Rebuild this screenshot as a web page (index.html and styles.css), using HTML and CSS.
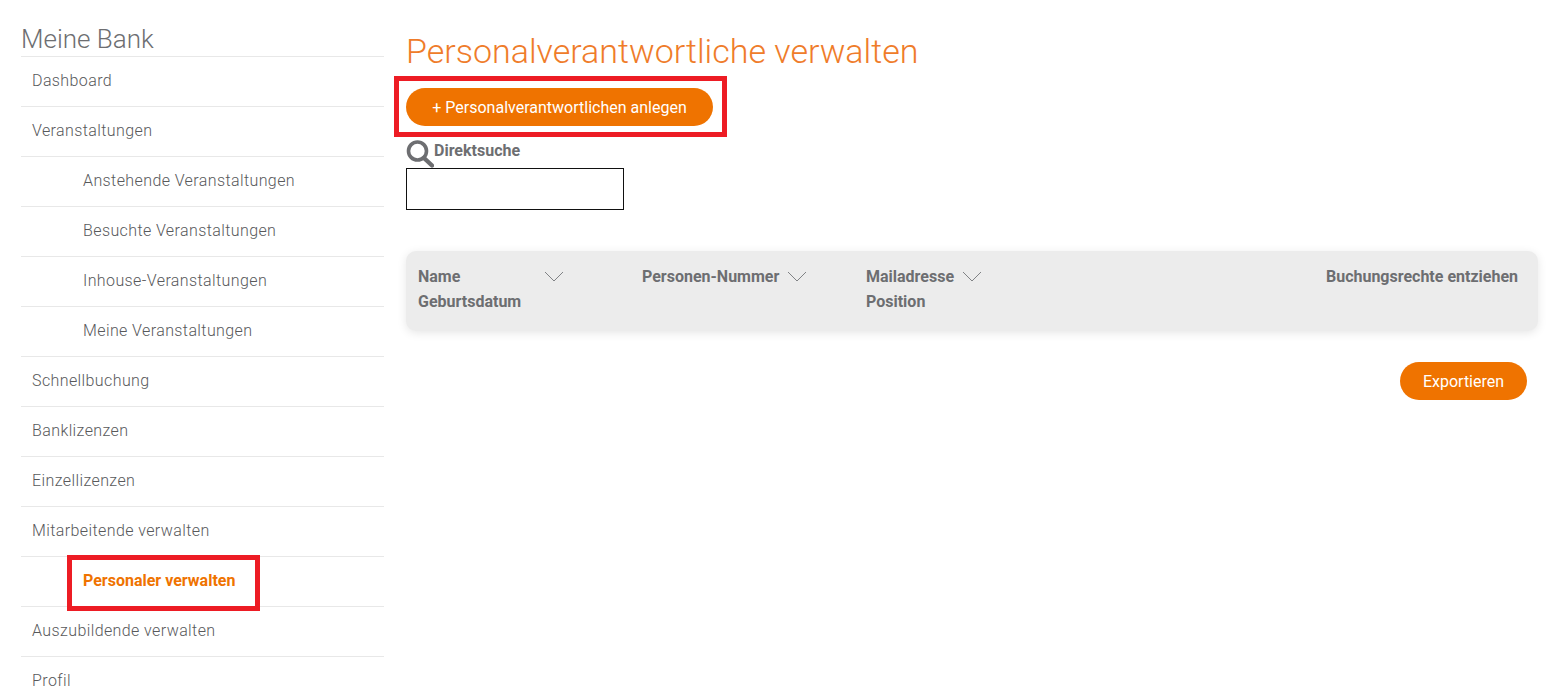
FILE: index.html
```html
<!DOCTYPE html>
<html lang="de">
<head>
<meta charset="utf-8">
<title>Personalverantwortliche verwalten</title>
<link rel="stylesheet" href="styles.css">
</head>
<body>
<div class="page">
  <aside class="sidebar">
    <h2 class="sidebar-title">Meine Bank</h2>
    <ul class="nav">
      <li class="nav-item">Dashboard</li>
      <li class="nav-item">Veranstaltungen</li>
      <li class="nav-item sub">Anstehende Veranstaltungen</li>
      <li class="nav-item sub">Besuchte Veranstaltungen</li>
      <li class="nav-item sub">Inhouse-Veranstaltungen</li>
      <li class="nav-item sub">Meine Veranstaltungen</li>
      <li class="nav-item">Schnellbuchung</li>
      <li class="nav-item">Banklizenzen</li>
      <li class="nav-item">Einzellizenzen</li>
      <li class="nav-item">Mitarbeitende verwalten</li>
      <li class="nav-item sub active">Personaler verwalten<span class="mark mark-nav"></span></li>
      <li class="nav-item">Auszubildende verwalten</li>
      <li class="nav-item">Profil</li>
    </ul>
  </aside>
  <main class="main">
    <h1 class="title">Personalverantwortliche verwalten</h1>
    <div class="add-row">
      <button class="btn btn-add">+ Personalverantwortlichen anlegen</button>
      <span class="mark mark-add"></span>
    </div>
    <div class="search-label">
      <svg class="search-icon" width="28" height="28" viewBox="0 0 28 28" aria-hidden="true">
        <circle cx="11.5" cy="11" r="9" fill="none" stroke="#6d6e71" stroke-width="3.6"/>
        <path d="M18 18l8 7.5" fill="none" stroke="#6d6e71" stroke-width="4.4" stroke-linecap="round"/>
      </svg>
      <span>Direktsuche</span>
    </div>
    <input class="search-input" type="text" aria-label="Direktsuche">
    <div class="table-head">
      <div class="col col-name">
        <div class="cell"><span class="label-name">Name</span><svg class="chev" width="20" height="11" viewBox="0 0 20 11"><path d="M1 1l9 9 9-9" fill="none" stroke="#808285" stroke-width="1"/></svg></div>
        <div>Geburtsdatum</div>
      </div>
      <div class="col col-num">
        <div class="cell">Personen-Nummer<svg class="chev" width="20" height="11" viewBox="0 0 20 11"><path d="M1 1l9 9 9-9" fill="none" stroke="#808285" stroke-width="1"/></svg></div>
      </div>
      <div class="col col-mail">
        <div class="cell">Mailadresse<svg class="chev" width="20" height="11" viewBox="0 0 20 11"><path d="M1 1l9 9 9-9" fill="none" stroke="#808285" stroke-width="1"/></svg></div>
        <div>Position</div>
      </div>
      <div class="col col-rights">Buchungsrechte entziehen</div>
    </div>
    <div class="actions">
      <button class="btn btn-export">Exportieren</button>
    </div>
  </main>
</div>
</body>
</html>
```

FILE: styles.css
```css
* { box-sizing: border-box; }
html, body { margin: 0; height: 700px; overflow: hidden; background: #fff; }
body { font-family: Roboto, "Liberation Sans", sans-serif; color: #6d6e71; }
.page { display: flex; height: 700px; padding-left: 21px; }
.sidebar { width: 363px; flex: none; }
.sidebar-title {
  margin: 0; height: 57px; padding-top: 23px;
  font-size: 26px; line-height: 32px; font-weight: 300; color: #6d6e71;
  border-bottom: 1px solid #e8e8e8;
}
.nav { list-style: none; margin: 0; padding: 0; }
.nav-item {
  position: relative;
  height: 50px; line-height: 48px; padding-left: 11px;
  font-size: 16px; font-weight: 300; letter-spacing: .4px; color: #58595b;
  border-bottom: 1px solid #e8e8e8;
}
.nav-item.sub { padding-left: 62px; }
.nav-item.active { font-weight: 700; color: #ef7300; letter-spacing: 0; }
.mark { position: absolute; border: 5px solid #ed1c24; pointer-events: none; }
.mark-nav { left: 46px; top: -2px; width: 193px; height: 56px; }
.main { flex: 1; padding: 0 22px 0 22px; min-width: 0; }
.title {
  margin: 0; padding-top: 31px; height: 88px;
  font-size: 34px; line-height: 40px; font-weight: 300; color: #ef7c2a;
}
.add-row { position: relative; height: 38px; }
.mark-add { left: -12px; top: -12px; width: 333px; height: 61px; }
.btn {
  border: 0; border-radius: 19px; height: 38px; padding: 0 20px;
  background: #ef7300; color: #fff;
  font-family: inherit; font-size: 16px; font-weight: 400;
}
.btn-add { width: 307px; padding: 0; }
.search-label {
  display: flex; align-items: flex-start; height: 42px; padding-top: 14px;
  font-size: 16px; font-weight: 700; line-height: 22px;
}
.search-icon { flex: none; margin-top: 0; }
.search-input {
  display: block; width: 218px; height: 42px; margin-top: 0;
  border: 1px solid #111; background: #fff; padding: 0;
}
.table-head {
  display: flex; margin-top: 41px; height: 80px; padding: 13px 20px 0 12px;
  background: #ececec; border-radius: 10px;
  box-shadow: 0 2px 10px rgba(0,0,0,.1);
  font-size: 16px; font-weight: 700; line-height: 25px; color: #6d6e71;
}
.col { flex: none; }
.cell { display: flex; align-items: center; }
.chev { flex: none; margin-left: 8px; }
.label-name { width: 118px; }
.col-name { width: 224px; }
.col-num { width: 224px; }
.col-mail { width: 200px; }
.col-rights { flex: 1; text-align: right; }
.actions { display: flex; justify-content: flex-end; padding: 31px 11px 0 0; }
.btn-export { width: 127px; padding: 0; }
```
